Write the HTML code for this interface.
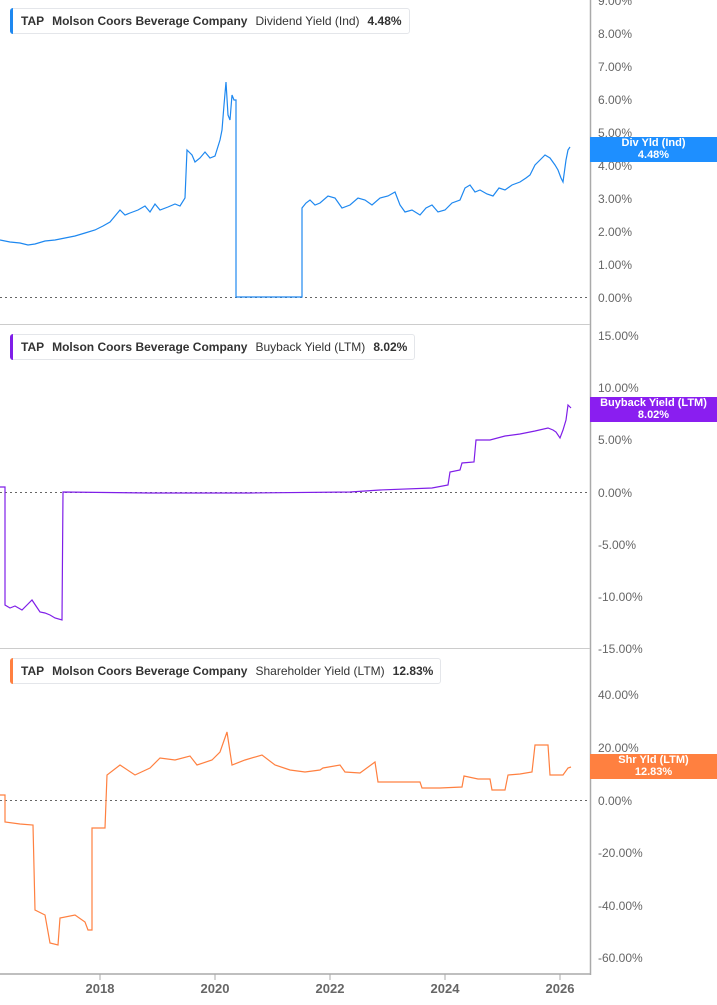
<!DOCTYPE html>
<html><head><meta charset="utf-8"><style>
body{margin:0;background:#fff;width:717px;height:1005px;overflow:hidden;font-family:"Liberation Sans",sans-serif}
.leg{position:absolute;left:10px;height:24px;border:1px solid #e4e6ea;border-radius:3px;background:#fff;font-size:12px;font-weight:bold;color:#333;line-height:24px;padding:0 7px 0 10px;white-space:nowrap;letter-spacing:0}
.leg:before{content:"";position:absolute;left:-1px;top:-1px;bottom:-1px;width:3px;border-radius:3px 0 0 3px;background:var(--c)}
.leg span{margin-right:8px}.leg .n{font-weight:normal}
.tag{position:absolute;left:590px;width:127px;height:25px;color:#fff;font-size:11px;font-weight:bold;text-align:center;line-height:11.5px;padding-top:1px;box-sizing:border-box}
</style></head><body>
<svg width="717" height="1005" style="position:absolute;left:0;top:0" font-family="Liberation Sans" font-size="12" fill="#666">
<line x1="590.5" y1="0" x2="590.5" y2="975" stroke="#aaa" stroke-width="1.5"/>
<line x1="0" y1="324.5" x2="590" y2="324.5" stroke="#ccc"/>
<line x1="0" y1="648.5" x2="590" y2="648.5" stroke="#ccc"/>
<line x1="0" y1="974" x2="591" y2="974" stroke="#aaa" stroke-width="1.5"/>
<g stroke="#aaa"><line x1="100" y1="974" x2="100" y2="980"/><line x1="215" y1="974" x2="215" y2="980"/><line x1="330" y1="974" x2="330" y2="980"/><line x1="445" y1="974" x2="445" y2="980"/><line x1="560" y1="974" x2="560" y2="980"/></g>
<g font-weight="bold" font-size="13" fill="#666" text-anchor="middle"><text x="100" y="993">2018</text><text x="215" y="993">2020</text><text x="330" y="993">2022</text><text x="445" y="993">2024</text><text x="560" y="993">2026</text></g>
<g stroke="#666" stroke-dasharray="2,3"><line x1="0" y1="297.5" x2="590" y2="297.5"/><line x1="0" y1="492.5" x2="590" y2="492.5"/><line x1="0" y1="800.5" x2="590" y2="800.5"/></g>
<g font-size="12">
<text x="598" y="5">9.00%</text><text x="598" y="38">8.00%</text><text x="598" y="71">7.00%</text><text x="598" y="104">6.00%</text><text x="598" y="137">5.00%</text><text x="598" y="170">4.00%</text><text x="598" y="203">3.00%</text><text x="598" y="236">2.00%</text><text x="598" y="269">1.00%</text><text x="598" y="302">0.00%</text>
<text x="598" y="340">15.00%</text><text x="598" y="392">10.00%</text><text x="598" y="444">5.00%</text><text x="598" y="497">0.00%</text><text x="598" y="549">-5.00%</text><text x="598" y="601">-10.00%</text><text x="598" y="653">-15.00%</text>
<text x="598" y="699">40.00%</text><text x="598" y="752">20.00%</text><text x="598" y="805">0.00%</text><text x="598" y="857">-20.00%</text><text x="598" y="910">-40.00%</text><text x="598" y="962">-60.00%</text>
</g>
<polyline fill="none" stroke="#1e88f0" stroke-width="1.2" points="0,240 10,242 20,243 28,245 35,244 45,241 55,240 65,238 75,236 85,233 95,230 103,226 110,222 115,216 120,210 125,215 130,213 138,210 145,206 150,212 155,204 160,210 168,207 175,204 180,206 185,198 187,150 192,155 195,162 200,158 205,152 210,158 215,156 220,140 222,130 224,105 226,82 228,115 230,120 232,95 234,100 236,100 236,297 302,297 302,208 306,203 310,200 315,205 320,203 328,196 335,198 342,208 350,205 358,198 365,200 372,205 380,198 388,196 395,192 400,205 405,212 412,210 420,215 426,208 432,205 438,212 445,210 452,203 460,200 465,188 470,185 475,192 480,190 487,194 493,196 499,188 505,190 512,185 520,182 526,178 530,175 535,165 540,160 545,155 550,158 555,165 558,170 561,178 563,182 566,160 568,150 570,147"/>
<polyline fill="none" stroke="#7f1ee8" stroke-width="1.2" points="0,487 5,487 5,605 10,608 15,606 22,610 28,604 32,600 36,606 40,612 45,613 50,615 55,618 62,620 63,492 150,493 250,493 350,492 380,490 432,488 448,485 450,472 460,470 462,463 474,462 476,440 490,440 505,436 520,434 535,431 548,428 553,430 556,432 560,438 563,430 566,420 568,405 571,408"/>
<polyline fill="none" stroke="#ff8040" stroke-width="1.2" points="0,795 5,795 5,822 20,824 33,825 35,910 45,915 50,943 58,945 60,918 75,915 85,922 88,930 92,930 92,828 105,828 107,775 120,765 135,775 150,768 160,758 175,760 190,756 197,765 212,760 220,752 227,732 232,765 245,760 262,755 275,765 290,770 305,772 320,770 323,768 340,765 345,772 360,773 375,762 378,782 400,782 420,782 422,788 440,788 462,787 464,776 478,779 490,779 492,790 505,790 508,775 520,774 532,772 535,745 548,745 550,775 563,775 568,768 571,767"/>
</svg>
<div class="leg" style="top:8px;--c:#1e88f0"><span>TAP</span><span>Molson Coors Beverage Company</span><span class="n">Dividend Yield (Ind)</span>4.48%</div>
<div class="leg" style="top:334px;--c:#7f1ee8"><span>TAP</span><span>Molson Coors Beverage Company</span><span class="n">Buyback Yield (LTM)</span>8.02%</div>
<div class="leg" style="top:658px;--c:#ff8040"><span>TAP</span><span>Molson Coors Beverage Company</span><span class="n">Shareholder Yield (LTM)</span>12.83%</div>
<div class="tag" style="top:137px;background:#1e8fff">Div Yld (Ind)<br>4.48%</div>
<div class="tag" style="top:397px;background:#8a1ef0">Buyback Yield (LTM)<br>8.02%</div>
<div class="tag" style="top:754px;background:#ff8040">Shr Yld (LTM)<br>12.83%</div>
</body></html>
